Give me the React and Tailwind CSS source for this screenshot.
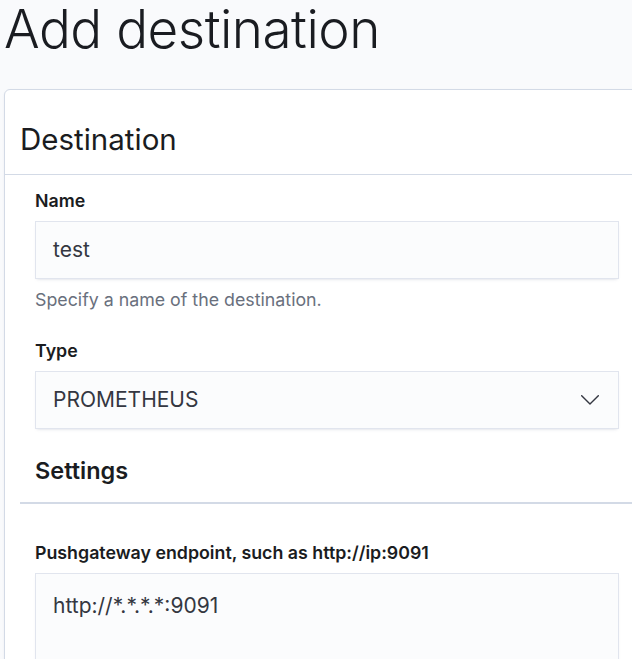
function FieldLabel({ children }) {
  return (
    <div className="text-[17.8px] leading-[24px] font-semibold text-[#1a1c21] mb-[8px]">{children}</div>
  );
}

const inputBox =
  'w-[584px] bg-[#fbfcfd] border border-[#e1e5ee] shadow-[0_2px_3px_-2px_rgba(152,162,179,0.45)] text-[21px] leading-[24px] text-[#343741]';

export default function App() {
  return (
    <div
      className="w-[632px] h-[659px] overflow-hidden bg-[#f9fafc] text-[#1a1c21]"
      style={{ fontFamily: 'Inter, "Noto Sans", sans-serif' }}
    >
      <h1 className="pl-[4px] text-[53px] leading-[58px] font-light tracking-[-0.5px]">Add destination</h1>

      {/* Destination card */}
      <div className="mt-[31px] ml-[4px] w-[680px] bg-white border border-[#d3dae6] rounded-[6px] shadow-[0_1px_2px_rgba(152,162,179,0.15)]">
        <div className="pt-[31px] pb-[17px] pl-[15px] border-b border-[#d3dae6]">
          <h2 className="text-[29.5px] leading-[36px] font-normal">Destination</h2>
        </div>

        <div className="pt-[14px] pl-[15px]">
          <div className="pl-[15px]">
            {/* Name */}
            <FieldLabel>Name</FieldLabel>
            <div className={`${inputBox} h-[58px] flex items-center pl-[17px]`}>test</div>
            <div className="mt-[9px] text-[17.8px] leading-[24px] text-[#69707d]">Specify a name of the destination.</div>

            {/* Type */}
            <div className="mt-[27px]">
              <FieldLabel>Type</FieldLabel>
              <div className={`${inputBox} h-[58px] flex items-center justify-between pl-[17px] pr-[19px]`}>
                <span>PROMETHEUS</span>
                <svg width="18" height="10" viewBox="0 0 18 10" fill="none" className="text-[#343741]">
                  <polyline points="0.7,0.7 9,9 17.3,0.7" stroke="currentColor" strokeWidth="1.4" strokeLinejoin="round" strokeLinecap="round" />
                </svg>
              </div>
            </div>
          </div>

          {/* Settings */}
          <div className="mt-[26px] pl-[15px] pb-[15px] border-b-2 border-[#d3dae6]">
            <h3 className="text-[23.5px] leading-[32px] font-semibold">Settings</h3>
          </div>

          <div className="pl-[15px] pt-[37px]">
            <FieldLabel>Pushgateway endpoint, such as http://ip:9091</FieldLabel>
            <div className={`${inputBox} h-[120px] pt-[20px] pl-[17px]`}>http://*.*.*.*:9091</div>
          </div>
        </div>
      </div>
    </div>
  );
}
